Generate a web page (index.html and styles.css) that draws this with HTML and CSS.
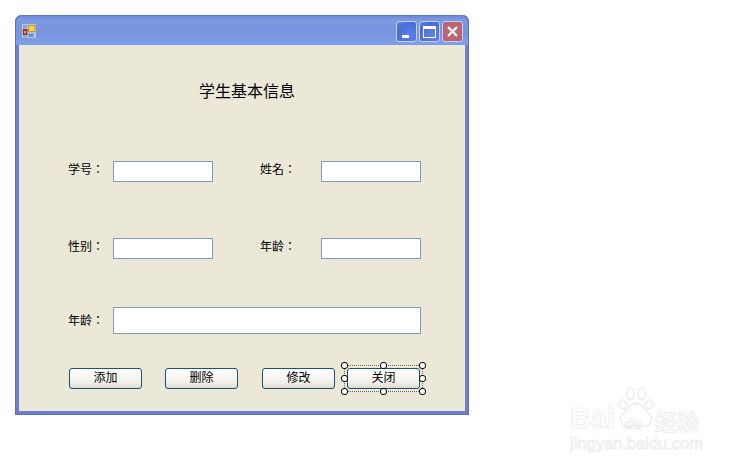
FILE: index.html
```html
<!DOCTYPE html>
<html lang="zh">
<head>
<meta charset="utf-8">
<title>学生基本信息</title>
<link rel="stylesheet" href="styles.css">
</head>
<body>
<div class="window">
  <div class="titlebar">
    <svg class="app-icon" width="16" height="16" viewBox="0 0 16 16">
      <rect x="0" y="0" width="14" height="14" fill="#b9c3dc"/>
      <rect x="1" y="1" width="4" height="3" fill="#8f9fc6"/>
      <rect x="6.500" y="1.500" width="6.500" height="6" fill="#f3d25a" stroke="#c79a1c" stroke-width="1"/>
      <rect x="1.500" y="5.500" width="3.500" height="5" fill="#c22b25" stroke="#7d1a18" stroke-width=".8"/>
      <rect x="2.500" y="7" width="1.500" height="2.500" fill="#f0c8b8"/>
      <rect x="6.500" y="9.500" width="5" height="3.500" fill="#5d95dc"/>
      <rect x="1" y="11.500" width="4" height="2" fill="#98a0b4"/>
    </svg>
    <div class="controls">
      <div class="ctl"><span class="min-glyph"></span></div>
      <div class="ctl"><span class="max-glyph"></span></div>
      <div class="ctl close">
        <svg width="13" height="13" viewBox="0 0 13 13"><path d="M2 2 11 11M11 2 2 11" stroke="#fff" stroke-width="2.2" fill="none"/></svg>
      </div>
    </div>
  </div>
  <div class="client">
    <h1 class="heading">学生基本信息</h1>
    <div class="fields">
      <label class="lbl col1" lang="zh-Hant">学号：</label><input class="box col2" type="text">
      <label class="lbl col4" lang="zh-Hant">姓名：</label><input class="box col5" type="text">
      <label class="lbl col1 row2" lang="zh-Hant">性别：</label><input class="box col2 row2" type="text">
      <label class="lbl col4 row2" lang="zh-Hant">年龄：</label><input class="box col5 row2" type="text">
      <label class="lbl col1 row3" lang="zh-Hant">年龄：</label><input class="box wide row3" type="text">
    </div>
    <div class="buttons">
      <button class="btn">添加</button>
      <button class="btn">删除</button>
      <button class="btn">修改</button>
      <button class="btn selected">关闭
        <span class="sel-frame"></span>
        <i class="h tl"></i><i class="h tc"></i><i class="h tr"></i>
        <i class="h ml"></i><i class="h mr"></i>
        <i class="h bl"></i><i class="h bc"></i><i class="h br"></i>
      </button>
    </div>
  </div>
</div>
<div class="watermark">
  <div class="wm-top">
    <span class="wm-bai">Bai</span>
    <svg class="wm-paw" width="38" height="44" viewBox="0 0 40 46" fill="none" stroke="#e8e8e8" stroke-width="1.2">
      <ellipse cx="6" cy="18" rx="3.500" ry="5" transform="rotate(-25 6 18)"/>
      <ellipse cx="14" cy="7" rx="4" ry="6"/>
      <ellipse cx="26" cy="7" rx="4" ry="6"/>
      <ellipse cx="34" cy="18" rx="3.500" ry="5" transform="rotate(25 34 18)"/>
      <path d="M20 17C14 17 12 23 7 27 1 32 4 42 12 41 16 40.500 24 40.500 28 41 36 42 39 32 33 27 28 23 26 17 20 17Z"/>
    </svg>
    <span class="wm-du">du</span>
    <span class="wm-cn">经验</span>
  </div>
  <div class="wm-url">jingyan.baidu.com</div>
</div>
</body>
</html>
```
FILE: styles.css
```css
* { box-sizing: border-box; }
html, body { margin: 0; height: 100%; background: #fff; overflow: hidden; }
body {
  padding: 15px 0 0 15px;
  font-family: "Noto Sans CJK SC", "Liberation Sans", sans-serif;
  color: #000;
  position: relative;
}
.window {
  width: 454px;
  height: 400px;
  background: #6f7fcb;
  border-radius: 7px 7px 0 0;
  padding: 1px 4px 4px;
  display: flex;
  flex-direction: column;
  box-shadow: inset 0 1px 0 #5f78c8, inset 1px 0 0 #5d6ebd, inset -1px 0 0 #5d6ebd, inset 0 -1px 0 #5d6ebd;
}
.titlebar {
  height: 29px;
  margin: 0 -3px;
  padding: 0 5px 0 6px;
  border-radius: 7px 7px 0 0;
  background: linear-gradient(#6b87d8 0, #7b97e0 3px, #7894de 19px, #7fa0ea 27px, #7c9ae6 29px);
  display: flex;
  align-items: center;
}
.app-icon { display: block; margin-top: 3px; }
.controls { margin-left: auto; display: flex; gap: 2px; margin-top: 2px; }
.ctl {
  width: 21px;
  height: 21px;
  border: 1px solid #c5d0f2;
  border-radius: 3px;
  background: radial-gradient(circle at 70% 75%, #5f82e6, #4a6cda 70%, #6a8ce6);
  display: flex;
  align-items: center;
  justify-content: center;
}
.ctl.close { background: radial-gradient(circle at 50% 50%, #c46a78, #b55f70); }
.min-glyph { width: 7px; height: 3px; background: #fff; margin-top: 9px; margin-right: 3px; }
.max-glyph { width: 13px; height: 12px; border: 1px solid #fff; border-top-width: 3px; }
.client {
  flex: 1;
  background: #ebe8d8;
  padding: 0 0 0 49px;
  display: flex;
  flex-direction: column;
}
.heading {
  margin: 0 0 0 131px;
  padding-top: 34px;
  height: 116px;
  font-size: 16px;
  line-height: 22px;
  font-weight: 400;
  white-space: nowrap;
}
.fields {
  display: grid;
  grid-template-columns: 45px 100px 47px 61px 100px;
  grid-template-rows: 21px 56px 21px 48px 27px;
  align-items: center;
}
.fields .col1 { grid-column: 1; }
.fields .col2 { grid-column: 2; }
.fields .col4 { grid-column: 4; }
.fields .col5 { grid-column: 5; }
.fields .row2 { grid-row: 3; }
.fields .row3 { grid-row: 5; }
.lbl {
  font: 12px/16px "Noto Sans CJK TC", "Noto Sans CJK SC", sans-serif;
  margin-top: -5px;
  white-space: nowrap;
}
.lbl.row3 { margin-top: -1px; }
.box {
  display: block;
  width: 100px;
  height: 21px;
  border: 1px solid #7f9db9;
  background: #fff;
  padding: 0;
  margin: 0;
  border-radius: 0;
  outline: 0;
}
.box.wide { grid-column: 2 / 6; width: 308px; height: 27px; }
.buttons {
  display: flex;
  margin: 34px 0 0 1px;
  gap: 23px;
}
.btn {
  position: relative;
  width: 73px;
  height: 21px;
  padding: 0 0 3px;
  border: 1px solid #1f4f7a;
  border-radius: 3px;
  background: linear-gradient(#fff, #f2f1ea 70%, #dedbd0);
  font: 12px/16px "Noto Sans CJK SC", sans-serif;
  color: #000;
}
.btn:nth-child(3) { margin-left: 1px; }
.btn.selected { margin-left: -11px; }
.sel-frame {
  position: absolute;
  left: -4px; top: -4px; right: -4px; bottom: -4px;
  border: 1px dotted #666;
}
.h {
  position: absolute;
  width: 7px;
  height: 7px;
  background: #fff;
  border: 1px solid #000;
  border-radius: 3px;
}
.tl, .tc, .tr { top: -7px; }
.ml, .mr { top: 6px; }
.bl, .bc, .br { bottom: -7px; }
.tl, .ml, .bl { left: -7px; }
.tc, .bc { left: 32px; }
.tr, .mr, .br { right: -7px; }
.watermark {
  position: absolute;
  left: 570px;
  top: 387px;
  width: 140px;
  color: transparent;
  -webkit-text-stroke: 0.6px #e6e6e6;
}
.wm-top { display: flex; align-items: flex-end; height: 46px; position: relative; }
.wm-bai { font: 700 29px/30px "Liberation Sans", sans-serif; width: 47px; margin-bottom: 0; }
.wm-paw { display: block; margin-bottom: 2px; }
.wm-du { position: absolute; left: 54px; top: 29px; font: 700 15px/15px "Liberation Sans", sans-serif; }
.wm-cn { font: 700 22px/24px "Noto Sans CJK SC", sans-serif; margin-bottom: 1px; white-space: nowrap; }
.wm-url { font: 400 16.500px/18px "Liberation Sans", sans-serif; margin-top: 1px; white-space: nowrap; }
```
